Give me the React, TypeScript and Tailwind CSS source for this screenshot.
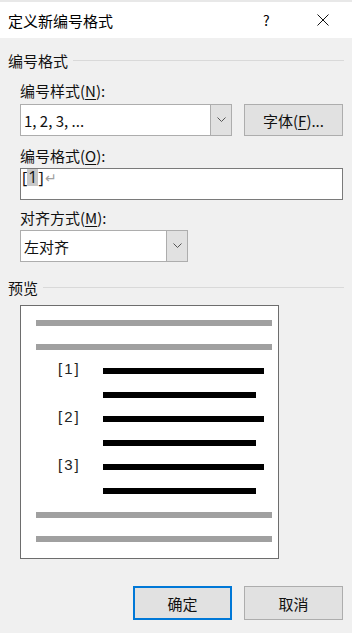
import React from "react";

const font = { fontFamily: '"Noto Sans CJK SC", "Noto Sans", sans-serif' };

function Chevron() {
  return (
    <svg width="9" height="6" viewBox="0 0 9 6" className="block">
      <path d="M0.5 0.5 L4.5 4.5 L8.5 0.5" fill="none" stroke="#555" strokeWidth="1" />
    </svg>
  );
}

function Select({ text, w }: { text: string; w: string }) {
  return (
    <div className={`flex ${w} h-[32px] border border-[#adadad] bg-white`}>
      <div className="flex-1 flex items-center pl-[3px] text-[15px] leading-none text-[#111]">{text}</div>
      <div className="w-[21px] flex items-center justify-center bg-[#e1e1e1] border-l border-[#adadad]">
        <Chevron />
      </div>
    </div>
  );
}

function Bar({ w, gray }: { w: string; gray?: boolean }) {
  return <div className={`h-[6px] mt-[9px] ${w} ${gray ? "bg-[#a0a0a0]" : "bg-black"}`} />;
}

export default function App() {
  const rows: Array<{ num?: string; type: "gray" | "long" | "short" }> = [
    { type: "gray" },
    { type: "gray" },
    { num: "[1]", type: "long" },
    { type: "short" },
    { num: "[2]", type: "long" },
    { type: "short" },
    { num: "[3]", type: "long" },
    { type: "short" },
    { type: "gray" },
    { type: "gray" },
  ];
  return (
    <div className="w-[352px] h-[633px] bg-[#f0f0f0] flex flex-col overflow-hidden text-[#111]" style={font}>
      {/* title bar */}
      <div className="h-[38px] bg-white border-t-2 border-[#e8e8e8] flex items-center text-[15px] leading-none">
        <div className="pl-[8px] flex-1 text-black">定义新编号格式</div>
        <div className="w-[10px] mr-[44px] text-[14px] text-black">?</div>
        <svg width="12" height="12" viewBox="0 0 12 12" className="mr-[23px]">
          <path d="M0.5 0.5 L11.5 11.5 M11.5 0.5 L0.5 11.5" stroke="#111" strokeWidth="1" />
        </svg>
      </div>

      {/* group: 编号格式 */}
      <div className="flex items-center mt-[12px] h-[20px] pl-[8px] pr-[8px]">
        <span className="text-[15px] leading-none">编号格式</span>
        <div className="flex-1 ml-[5px] h-px bg-[#d9d9d9]" />
      </div>

      <div className="pl-[20px] pr-[9px]">
        <div className="mt-[10px] h-[20px] flex items-center text-[15px] leading-none">
          编号样式(<span className="underline underline-offset-2">N</span>):
        </div>
        <div className="mt-[4px] flex gap-[12px]">
          <Select text="1, 2, 3, ..." w="w-[212px]" />
          <div className="w-[99px] h-[32px] flex items-center justify-center bg-[#e1e1e1] border border-[#adadad] text-[15px] leading-none">
            字体(<span className="underline underline-offset-2">F</span>)...
          </div>
        </div>

        <div className="mt-[9px] h-[20px] flex items-center text-[15px] leading-none">
          编号格式(<span className="underline underline-offset-2">O</span>):
        </div>
        <div className="mt-[3px] h-[32px] border border-[#7a7a7a] bg-white flex items-start">
          <div className="flex items-start pl-[1px] text-[16px] leading-[18px]" style={{ fontFamily: '"Open Sans", sans-serif' }}>
            <span>[</span>
            <span className="bg-[#c8c8c8] px-[1px] leading-[16px] pb-[1px]">1</span>
            <span>]</span>
            <span className="text-[#a0a0a0] text-[14px] ml-[1px]">↵</span>
          </div>
        </div>

        <div className="mt-[7px] h-[20px] flex items-center text-[15px] leading-none">
          对齐方式(<span className="underline underline-offset-2">M</span>):
        </div>
        <div className="mt-[3px]">
          <Select text="左对齐" w="w-[168px]" />
        </div>
      </div>

      {/* group: 预览 */}
      <div className="flex items-center mt-[15px] h-[20px] pl-[8px] pr-[8px]">
        <span className="text-[15px] leading-none">预览</span>
        <div className="flex-1 ml-[5px] h-px bg-[#d9d9d9]" />
      </div>

      <div className="ml-[20px] mt-[8px] w-[259px] h-[254px] bg-white border border-[#6d6d6d] pt-[5px]">
        {rows.map((r, i) => (
          <div key={i} className="h-[24px] flex">
            {r.type === "gray" ? (
              <div className="ml-[15px]">
                <Bar w="w-[236px]" gray />
              </div>
            ) : (
              <>
                <div className="w-[82px] pl-[37px] pt-[1px] leading-[18px]">
                  {r.num && (
                    <div className="text-[15px] leading-[18px] tracking-[2px] text-[#222]" style={{ fontFamily: '"Liberation Sans", sans-serif' }}>
                      {r.num}
                    </div>
                  )}
                </div>
                <Bar w={r.type === "long" ? "w-[161px]" : "w-[153px]"} />
              </>
            )}
          </div>
        ))}
      </div>

      {/* buttons */}
      <div className="mt-[27px] flex justify-end gap-[12px] pr-[9px]">
        <div className="w-[99px] h-[34px] flex items-center justify-center bg-[#e1e1e1] border-2 border-[#0078d7] text-[15px] leading-none">
          确定
        </div>
        <div className="w-[99px] h-[34px] flex items-center justify-center bg-[#e1e1e1] border border-[#adadad] text-[15px] leading-none">
          取消
        </div>
      </div>
    </div>
  );
}
